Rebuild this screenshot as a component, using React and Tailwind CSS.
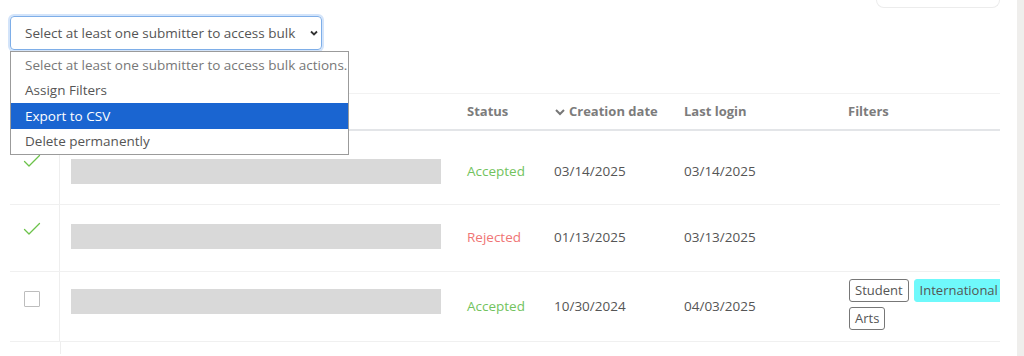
import React from "react";

const Check = () => (
    <svg className="w-[18px] h-[14px] text-[#6cc24a]" viewBox="0 0 18 14" fill="none" stroke="currentColor">
        <path strokeWidth={1.3} strokeLinecap="round" strokeLinejoin="round" d="M1.5 7.5l4.5 4.5L16.5 1.5" />
    </svg>
);

const Tag = ({ children, cyan }) => (
    <span
        className={
            "inline-flex items-center h-[23px] px-[5px] rounded-[3px] text-[13px] text-[#555] whitespace-nowrap " +
            (cyan ? "bg-[#6ff9fb] border border-[#6ff9fb]" : "border border-[#777]")
        }
    >
        {children}
    </span>
);

const rows = [
    { mark: "check", status: "Accepted", created: "03/14/2025", login: "03/14/2025", h: "h-[74px]", markPad: "pt-[23px]", barPad: "pt-[28px]", textPad: "pt-[30px]" },
    { mark: "check", status: "Rejected", created: "01/13/2025", login: "03/13/2025", h: "h-[67px]", markPad: "pt-[17px]", barPad: "pt-[19px]", textPad: "pt-[22px]" },
    { mark: "box", status: "Accepted", created: "10/30/2024", login: "04/03/2025", h: "h-[70px]", markPad: "pt-[18px]", barPad: "pt-[17px]", textPad: "pt-[24px]", tags: true },
];

const cols = "grid grid-cols-[50px_395px_87px_130px_164px_164px]";

export default function App() {
    return (
        <div className="w-[1024px] h-[356px] bg-white overflow-hidden flex font-['Open_Sans',sans-serif]">
            <div className="relative flex-1 min-w-0">
                {/* top bar */}
                <div className="flex justify-between pl-[10px] pr-[17px]">
                    <div className="pt-[16px]">
                        <div className="w-[312px] h-[34px] rounded-[4px] border border-[#7eaee8] ring-2 ring-[#d3e4fa] flex items-center justify-between pl-[14px] pr-[2px] text-[13.5px] text-[#555]">
                            <span className="whitespace-nowrap">Select at least one submitter to access bulk</span>
                            <svg className="w-[10px] h-[10px] text-[#333]" viewBox="0 0 10 10" fill="none" stroke="currentColor">
                                <path strokeWidth={1.8} d="M2 3.5l3 3 3-3" />
                            </svg>
                        </div>
                    </div>
                    <div className="w-[124px] h-[8px] border border-[#ececec] border-t-0 rounded-b-[8px]" />
                </div>

                {/* table */}
                <div className="mt-[43px] ml-[10px] w-[990px] overflow-hidden">
                    <div className={cols + " h-[38px] items-center border-t border-[#f2f2f2] border-b-2 border-b-[#e3e5e8] text-[13px] font-bold text-[#7c7c7c]"}>
                        <div />
                        <div />
                        <div className="px-3">Status</div>
                        <div className="px-3 flex items-center gap-[3px]">
                            <svg className="w-[12px] h-[12px] text-[#777]" viewBox="0 0 12 12" fill="none" stroke="currentColor">
                                <path strokeWidth={2} d="M2 4l4 4 4-4" />
                            </svg>
                            Creation date
                        </div>
                        <div className="px-3">Last login</div>
                        <div className="px-3">Filters</div>
                    </div>
                    {rows.map((r, i) => (
                        <div key={i} className={cols + " " + r.h + " border-b border-[#f0f0f0] text-[13.5px] text-[#555]"}>
                            <div className={"border-r border-[#eeeeee] pl-[13px] " + r.markPad}>
                                {r.mark === "check" ? (
                                    <Check />
                                ) : (
                                    <div className="ml-[1px] w-[16px] h-[16px] border border-[#bdbdbd] rounded-[1px] mt-[1px]" />
                                )}
                            </div>
                            <div className={"pl-[11px] pr-[14px] " + r.barPad}>
                                <div className="h-[25px] bg-[#d9d9d9]" />
                            </div>
                            <div className={"px-3 " + r.textPad + (r.status === "Accepted" ? " text-[#72c35e]" : " text-[#f07575]")}>
                                {r.status}
                            </div>
                            <div className={"px-3 " + r.textPad}>{r.created}</div>
                            <div className={"px-3 " + r.textPad}>{r.login}</div>
                            <div className="pl-[13px] pt-[7px]">
                                {r.tags && (
                                    <div className="w-[190px] flex flex-wrap gap-[5px]">
                                        <Tag>Student</Tag>
                                        <Tag cyan>International</Tag>
                                        <Tag>Arts</Tag>
                                    </div>
                                )}
                            </div>
                        </div>
                    ))}
                    <div className="ml-[50px] h-[12px] border-l border-[#eeeeee]" />
                </div>

                {/* open native select list */}
                <div className="absolute left-[10px] top-[51px] w-[339px] border border-[#9b9b9b] bg-white text-[13.5px] text-[#555] whitespace-nowrap">
                    <div className="h-[26px] flex items-center pl-[14px] text-[#777]">Select at least one submitter to access bulk actions.</div>
                    <div className="h-[25px] flex items-center pl-[14px]">Assign Filters</div>
                    <div className="h-[26px] flex items-center pl-[14px] bg-[#1a65d1] text-white">Export to CSV</div>
                    <div className="h-[25px] flex items-center pl-[14px]">Delete permanently</div>
                </div>
            </div>
            <div className="w-[7px] bg-[#efeeec]" />
        </div>
    );
}
